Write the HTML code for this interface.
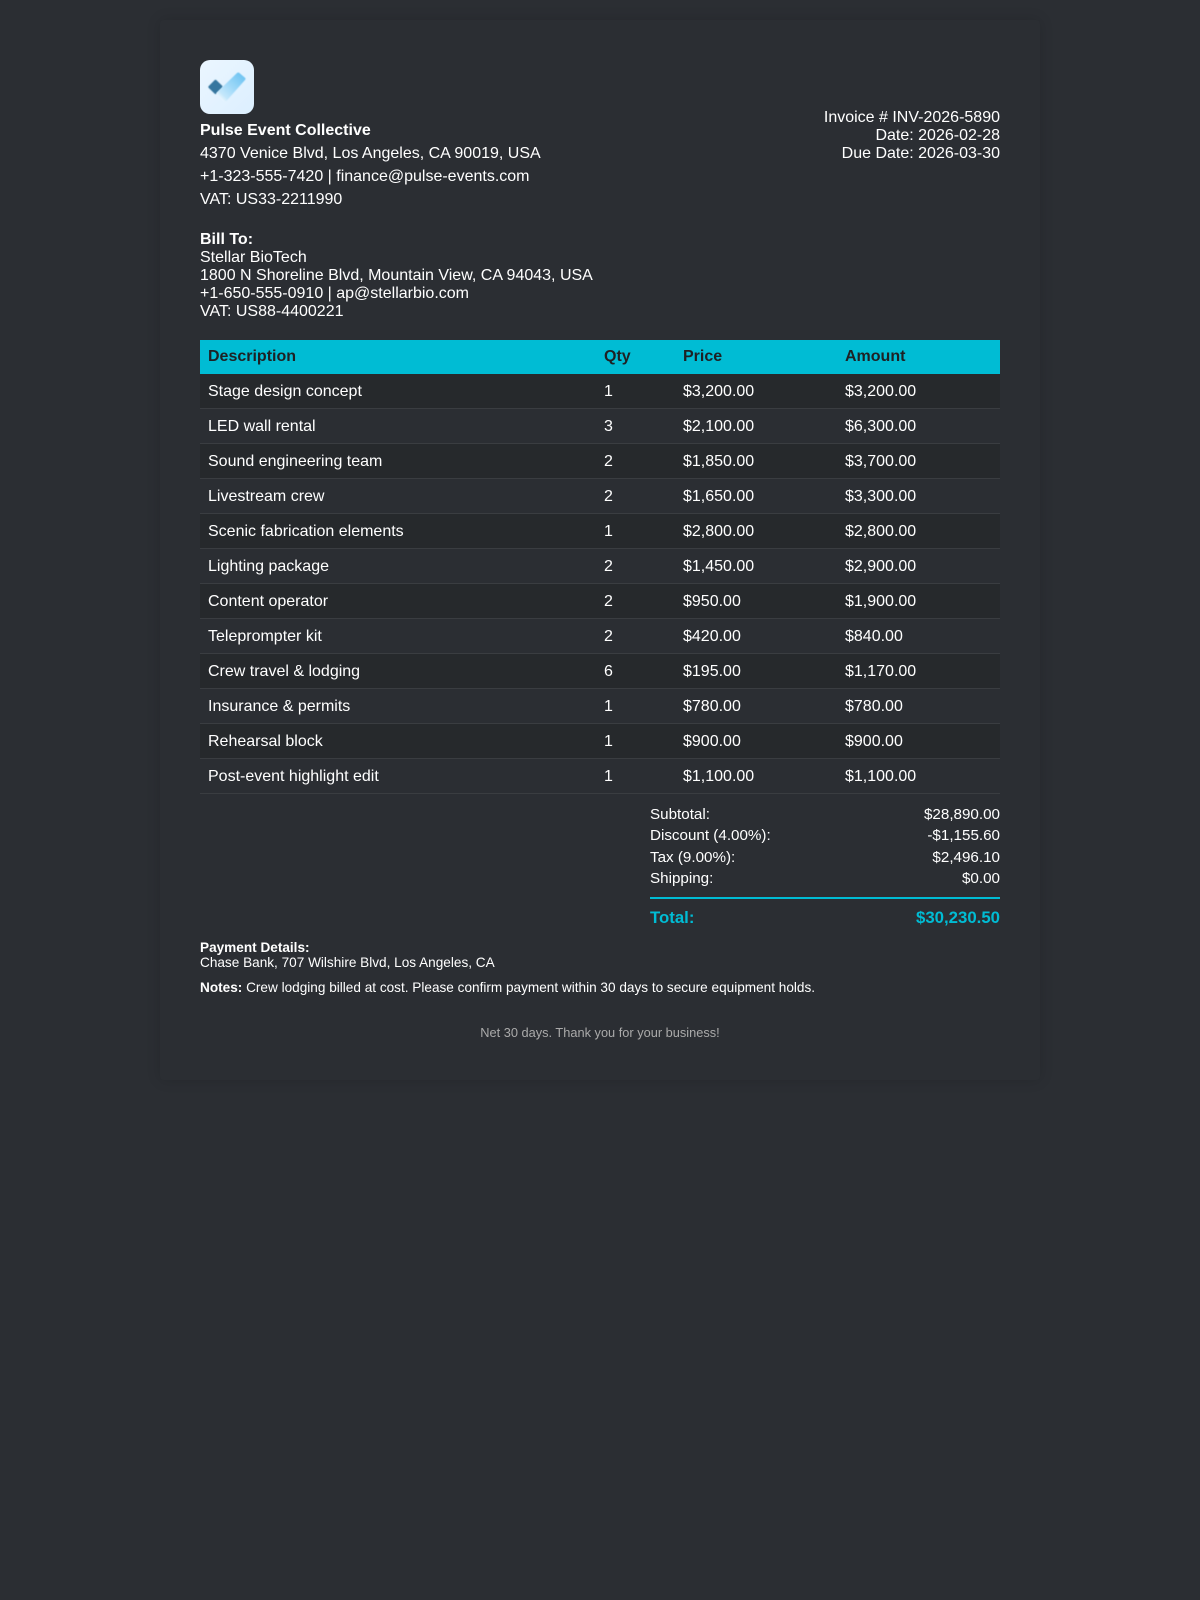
<!DOCTYPE html>
<html lang="en">
<head>
<meta charset="utf-8">
<title>Invoice INV-2026-5890</title>
<style>
*{box-sizing:border-box}
html,body{margin:0;padding:0;height:1600px;width:1200px;overflow:hidden}
body{background:#2b2e33;font-family:"Liberation Sans",Arial,sans-serif;color:#fff;font-size:16px}
.card{position:absolute;left:160px;top:20px;width:880px;height:1060px;background:#2b2e33;border-radius:4px;box-shadow:0 0 14px rgba(0,0,0,.14)}
.abs{position:absolute}
.logo{left:200px;top:60px;width:54px;height:54px}
.company{left:200px;top:119px;line-height:23px}
.meta{right:200px;top:109px;text-align:right;line-height:18px}
.bill{left:200px;top:231px;line-height:18px}
table{position:absolute;left:200px;top:340px;width:800px;border-collapse:separate;border-spacing:0;table-layout:fixed}
th{background:#00bcd4;color:#1e2124;text-align:left;font-weight:bold;padding:8px 8px 8px;height:34px;line-height:18px}
td{padding:9px 8px 7px;height:35px;line-height:18px;border-bottom:1px solid #3a3d41}
tbody tr:nth-child(odd) td{background:#26292c}
.totals{left:650px;top:804px;width:350px;font-size:15.2px;line-height:21.33px}
.row{display:flex;justify-content:space-between}
.rule{left:650px;top:897px;width:350px;height:2px;background:#00bcd4}
.grand{left:650px;top:908px;width:350px;font-size:16.8px;font-weight:bold;color:#00bcd4;line-height:20px}
.pay{left:200px;top:940px;font-size:13.6px;line-height:15px}
.notes{left:200px;top:980px;font-size:13.6px;line-height:16px}
.foot{left:200px;top:1025px;width:800px;text-align:center;font-size:12.8px;line-height:15px;color:#aaaaaa}
</style>
</head>
<body>
<div class="card"></div>

<svg class="abs logo" viewBox="0 0 54 54" xmlns="http://www.w3.org/2000/svg">
  <defs>
    <linearGradient id="bg" x1="0" y1="0" x2="1" y2="1">
      <stop offset="0" stop-color="#ebf6ff"/>
      <stop offset="1" stop-color="#dcefff"/>
    </linearGradient>
    <linearGradient id="bar" x1="20" y1="38" x2="42" y2="15" gradientUnits="userSpaceOnUse">
      <stop offset="0" stop-color="#eaf6fe"/>
      <stop offset="0.14" stop-color="#c4e7fb"/>
      <stop offset="0.45" stop-color="#a4dbf9"/>
      <stop offset="1" stop-color="#70c4f2"/>
    </linearGradient>
    <filter id="soft" x="-20%" y="-20%" width="140%" height="140%"><feGaussianBlur stdDeviation="0.4"/></filter>
  </defs>
  <rect x="0" y="0" width="54" height="54" rx="10" fill="url(#bg)"/>
  <path d="M14.5 20.2 Q15.5 19.4 16.5 20.2 L22.2 25.8 Q23 26.8 22.2 27.8 L16.6 33.6 Q15.6 34.6 14.6 33.6 L8.8 28 Q7.8 27 8.8 26 Z" fill="#36769f" filter="url(#soft)"/>
  <path d="M37 13 Q38.2 12 39.4 13 L45 17.8 Q46 18.8 45 20 L26.4 41 Q25 42.2 23.6 41.2 L16.8 34.6 Q15.8 33.2 17 32.2 Z" fill="url(#bar)" filter="url(#soft)"/>
</svg>

<div class="abs company">
  <div><b>Pulse Event Collective</b></div>
  <div>4370 Venice Blvd, Los Angeles, CA 90019, USA</div>
  <div>+1-323-555-7420 | finance@pulse-events.com</div>
  <div>VAT: US33-2211990</div>
</div>

<div class="abs meta">
  <div>Invoice # INV-2026-5890</div>
  <div>Date: 2026-02-28</div>
  <div>Due Date: 2026-03-30</div>
</div>

<div class="abs bill">
  <div><b>Bill To:</b></div>
  <div>Stellar BioTech</div>
  <div>1800 N Shoreline Blvd, Mountain View, CA 94043, USA</div>
  <div>+1-650-555-0910 | ap@stellarbio.com</div>
  <div>VAT: US88-4400221</div>
</div>

<table>
  <colgroup><col style="width:396px"><col style="width:79px"><col style="width:162px"><col style="width:163px"></colgroup>
  <thead><tr><th>Description</th><th>Qty</th><th>Price</th><th>Amount</th></tr></thead>
  <tbody>
    <tr><td>Stage design concept</td><td>1</td><td>$3,200.00</td><td>$3,200.00</td></tr>
    <tr><td>LED wall rental</td><td>3</td><td>$2,100.00</td><td>$6,300.00</td></tr>
    <tr><td>Sound engineering team</td><td>2</td><td>$1,850.00</td><td>$3,700.00</td></tr>
    <tr><td>Livestream crew</td><td>2</td><td>$1,650.00</td><td>$3,300.00</td></tr>
    <tr><td>Scenic fabrication elements</td><td>1</td><td>$2,800.00</td><td>$2,800.00</td></tr>
    <tr><td>Lighting package</td><td>2</td><td>$1,450.00</td><td>$2,900.00</td></tr>
    <tr><td>Content operator</td><td>2</td><td>$950.00</td><td>$1,900.00</td></tr>
    <tr><td>Teleprompter kit</td><td>2</td><td>$420.00</td><td>$840.00</td></tr>
    <tr><td>Crew travel &amp; lodging</td><td>6</td><td>$195.00</td><td>$1,170.00</td></tr>
    <tr><td>Insurance &amp; permits</td><td>1</td><td>$780.00</td><td>$780.00</td></tr>
    <tr><td>Rehearsal block</td><td>1</td><td>$900.00</td><td>$900.00</td></tr>
    <tr><td>Post-event highlight edit</td><td>1</td><td>$1,100.00</td><td>$1,100.00</td></tr>
  </tbody>
</table>

<div class="abs totals">
  <div class="row"><span>Subtotal:</span><span>$28,890.00</span></div>
  <div class="row"><span>Discount (4.00%):</span><span>-$1,155.60</span></div>
  <div class="row"><span>Tax (9.00%):</span><span>$2,496.10</span></div>
  <div class="row"><span>Shipping:</span><span>$0.00</span></div>
</div>
<div class="abs rule"></div>
<div class="abs grand row"><span>Total:</span><span>$30,230.50</span></div>

<div class="abs pay">
  <div><b>Payment Details:</b></div>
  <div>Chase Bank, 707 Wilshire Blvd, Los Angeles, CA</div>
</div>
<div class="abs notes"><b>Notes:</b> Crew lodging billed at cost. Please confirm payment within 30 days to secure equipment holds.</div>
<div class="abs foot">Net 30 days. Thank you for your business!</div>
</body>
</html>
